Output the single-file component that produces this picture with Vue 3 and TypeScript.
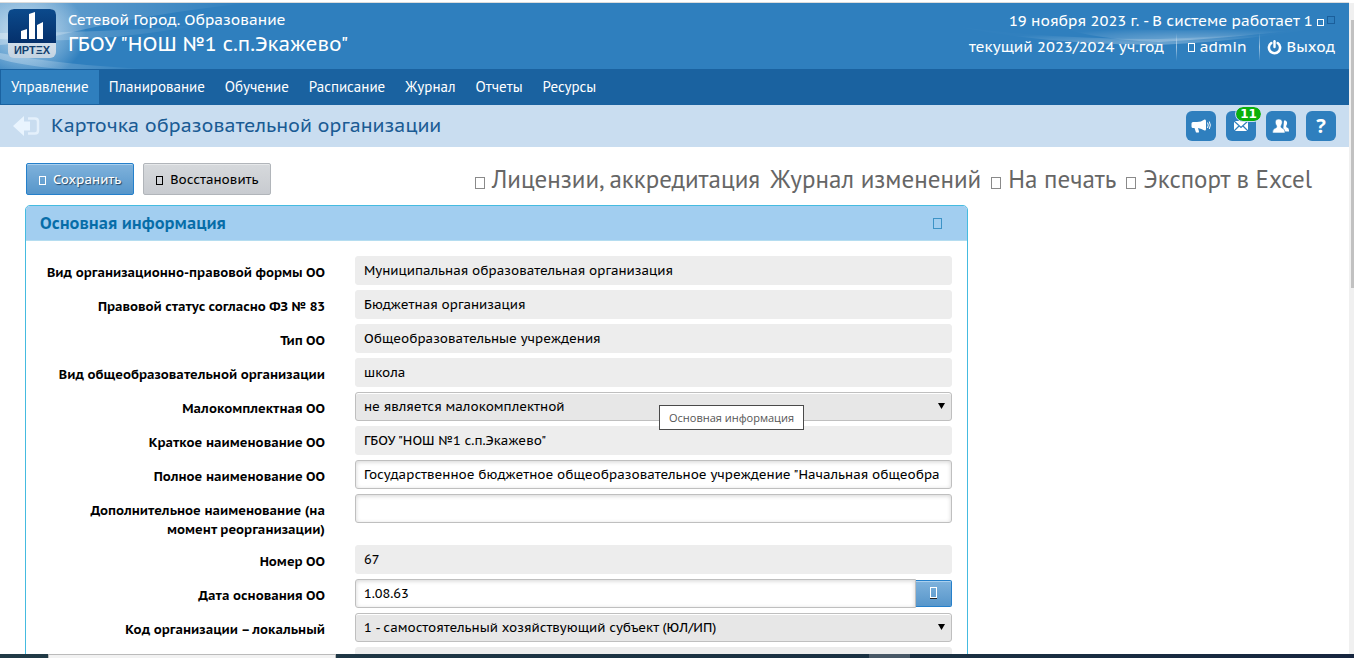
<script setup lang="ts">
import { ref } from 'vue'

type Kind = 'readonly' | 'text' | 'select' | 'date'

interface Field {
  id: string
  label: string
  kind: Kind
  value: string
}

const menu: string[] = ['Управление', 'Планирование', 'Обучение', 'Расписание', 'Журнал', 'Отчеты', 'Ресурсы']

const fields = ref<Field[]>([
  { id: 'legal-form', label: 'Вид организационно-правовой формы ОО', kind: 'readonly', value: 'Муниципальная образовательная организация' },
  { id: 'legal-status', label: 'Правовой статус согласно ФЗ № 83', kind: 'readonly', value: 'Бюджетная организация' },
  { id: 'type', label: 'Тип ОО', kind: 'readonly', value: 'Общеобразовательные учреждения' },
  { id: 'school-kind', label: 'Вид общеобразовательной организации', kind: 'readonly', value: 'школа' },
  { id: 'small', label: 'Малокомплектная ОО', kind: 'select', value: 'не является малокомплектной' },
  { id: 'short-name', label: 'Краткое наименование ОО', kind: 'readonly', value: 'ГБОУ "НОШ №1 с.п.Экажево"' },
  { id: 'full-name', label: 'Полное наименование ОО', kind: 'text', value: 'Государственное бюджетное общеобразовательное учреждение "Начальная общеобра' },
  { id: 'extra-name', label: 'Дополнительное наименование (на момент реорганизации)', kind: 'text', value: '' },
  { id: 'number', label: 'Номер ОО', kind: 'readonly', value: '67' },
  { id: 'founded', label: 'Дата основания ОО', kind: 'date', value: '1.08.63' },
  { id: 'local-code', label: 'Код организации – локальный', kind: 'select', value: '1 - самостоятельный хозяйствующий субъект (ЮЛ/ИП)' },
  { id: 'next', label: '', kind: 'readonly', value: '' },
])
</script>

<template>
  <div class="screen">
    <div class="viewport">
      <div class="page">
        <header class="top">
          <svg class="swoosh left" viewBox="0 0 340 66" aria-hidden="true">
            <defs>
              <radialGradient id="glow">
                <stop offset="0" stop-color="#fff" stop-opacity=".75" />
                <stop offset=".55" stop-color="#d5eaf8" stop-opacity=".4" />
                <stop offset="1" stop-color="#fff" stop-opacity="0" />
              </radialGradient>
              <linearGradient id="fade-r">
                <stop offset="0" stop-color="#fff" stop-opacity=".3" />
                <stop offset="1" stop-color="#fff" stop-opacity="0" />
              </linearGradient>
            </defs>
            <ellipse cx="26" cy="30" rx="60" ry="48" fill="url(#glow)" />
            <path d="M0 0H250Q150 10 60 32Q25 40 0 42Z" fill="url(#fade-r)" />
            <path d="M0 36Q90 42 200 22Q100 30 0 30Z" fill="url(#fade-r)" />
            <path d="M0 50Q60 62 150 66H60Q20 62 0 56Z" fill="url(#fade-r)" />
          </svg>
          <svg class="swoosh right" viewBox="0 0 400 66" aria-hidden="true">
            <defs>
              <radialGradient id="arc" cx=".5" cy=".9" r=".5">
                <stop offset="0" stop-color="#fff" stop-opacity=".3" />
                <stop offset="1" stop-color="#fff" stop-opacity=".01" />
              </radialGradient>
            </defs>
            <path d="M90 16Q130 36 210 39Q300 34 385 22Q300 28 210 27Q130 26 90 16Z" fill="url(#arc)" />
            <path d="M10 24Q100 42 210 42Q300 38 385 22Q300 34 210 36Q100 36 10 24Z" fill="url(#arc)" />
          </svg>

          <svg class="logo" viewBox="0 0 48 49" role="img" aria-label="ИРТЕХ">
            <defs>
              <linearGradient id="navy" x2="0" y2="1">
                <stop offset="0" stop-color="#0b4a8c" />
                <stop offset="1" stop-color="#05306b" />
              </linearGradient>
              <linearGradient id="plate" x2="0" y2="1">
                <stop offset="0" stop-color="#f4f8fb" />
                <stop offset="1" stop-color="#c3d3e2" />
              </linearGradient>
            </defs>
            <rect width="48" height="49" rx="6" fill="url(#plate)" />
            <path d="M0 34V6Q0 0 6 0H42Q48 0 48 6V34Z" fill="url(#navy)" />
            <path d="M13 22L19 20V30H13ZM21 5L27 3V30H21ZM29 16L35 13V30H29Z" fill="#fff" />
            <text x="24" y="45" text-anchor="middle">ИРТΞХ</text>
          </svg>
          <div class="titles">
            <div class="product">Сетевой Город. Образование</div>
            <div class="school">ГБОУ "НОШ №1 с.п.Экажево"</div>
          </div>
          <div class="session">
            <div class="today">19 ноября 2023 г. - В системе работает 1 <i class="tofu tiny"></i><i class="tofu tiny dark"></i></div>
            <div class="user-row">
              <a href="#">текущий 2023/2024 уч.год</a>
              <a href="#" class="parted"><i class="tofu tiny tall"></i> admin</a>
              <a href="#" class="parted">
                <svg class="power" viewBox="0 0 15 15" aria-hidden="true">
                  <path d="M4.300 3A5.600 5.600 0 1 0 10.700 3" fill="none" stroke="#fff" stroke-width="2.600" stroke-linecap="round" />
                  <path d="M7.500 1.300V7" stroke="#fff" stroke-width="2.400" stroke-linecap="round" />
                </svg>Выход
              </a>
            </div>
          </div>
        </header>

        <nav class="menu">
          <a v-for="(item, i) in menu" :key="item" href="#" :class="{ active: i === 0 }">{{ item }}</a>
        </nav>

        <div class="heading">
          <a href="#" class="back" aria-label="Назад">
            <svg viewBox="0 0 30 22" aria-hidden="true">
              <path d="M1 11L12 1V6.5H18V15.5H12V21Z" fill="#e9f4fe" />
              <path d="M16 3.500H23Q26 3.500 26 6.500V15.500Q26 18.500 23 18.500H16" fill="none" stroke="#e4f0fb" stroke-width="2.500" />
            </svg>
          </a>
          <h1>Карточка образовательной организации</h1>
          <div class="tools">
            <button type="button" aria-label="Объявления">
              <svg viewBox="0 0 30 30" aria-hidden="true">
                <path d="M5.500 12.500Q5.500 11 7 11H11Q15 11 18.500 8.500Q20 8 20 10V18Q20 20 18.500 19.500Q15.500 17.500 12 17L13 20.500Q13 22 11.500 21.500H10L8.500 17H7Q5.500 17 5.500 15.500Z" fill="#fff" />
                <path d="M21.500 11.500Q23 14 21.500 17M23.300 10.500Q25.400 14 23.300 18" fill="none" stroke="#fff" />
              </svg>
            </button>
            <button type="button" aria-label="Почта">
              <svg viewBox="0 0 30 30" aria-hidden="true">
                <path d="M8 10H22V20H8Z" fill="#fff" />
                <path d="M8 10L15 16.500L22 10M8 20L13 15M22 20L17 15" fill="none" stroke="#2f7fbe" stroke-width="1.200" />
              </svg>
              <span class="badge">11</span>
            </button>
            <button type="button" aria-label="Пользователи">
              <svg viewBox="0 0 30 30" aria-hidden="true">
                <path d="M18 9.500C21 9 21.800 12 20.500 14.200C19.900 15.300 20.100 16 21 16.500Q23 17.200 23 19.500V20.500H17Z" fill="#fff" />
                <path d="M12.800 8C16.500 8 17 11.500 15.500 14C14.600 15.500 14.800 16.500 16 17Q19 17.800 19 21V22H6.600V21Q6.600 17.800 9.600 17C10.900 16.500 11 15.500 10.100 14C8.600 11.500 9.100 8 12.800 8Z" fill="#fff" stroke="#2f7fbe" stroke-width=".6" />
              </svg>
            </button>
            <button type="button" class="help">?</button>
          </div>
        </div>

        <main>
          <div class="actions">
            <button type="button" class="btn primary"><i class="tofu"></i>Сохранить</button>
            <button type="button" class="btn"><i class="tofu"></i>Восстановить</button>
            <div class="links">
              <a href="#"><i class="tofu big"></i>Лицензии, аккредитация</a>
              <a href="#">Журнал изменений</a>
              <a href="#"><i class="tofu big"></i>На печать</a>
              <a href="#"><i class="tofu big"></i>Экспорт в Excel</a>
            </div>
          </div>

          <section class="panel">
            <h2>Основная информация <i class="tofu mark"></i></h2>
            <form class="form" @submit.prevent>
              <div v-for="f in fields" :key="f.id" class="row">
                <label :for="f.id">{{ f.label }}</label>
                <input v-if="f.kind === 'readonly'" :id="f.id" class="control plain" type="text" readonly :value="f.value" />
                <input v-else-if="f.kind === 'text'" :id="f.id" v-model="f.value" class="control box" type="text" />
                <div v-else-if="f.kind === 'select'" class="pick">
                  <select :id="f.id" v-model="f.value" class="control">
                    <option :value="f.value">{{ f.value }}</option>
                  </select>
                  <svg class="arrow" viewBox="0 0 7 6" aria-hidden="true"><path d="M0 0H7L3.500 6Z" /></svg>
                </div>
                <div v-else class="date">
                  <input :id="f.id" v-model="f.value" class="control box" type="text" />
                  <button type="button" aria-label="Календарь"><i class="tofu"></i></button>
                </div>
              </div>
            </form>
          </section>
        </main>
        <div class="tip" role="tooltip">Основная информация</div>
      </div>
      <div class="scroll"><div class="thumb"></div></div>
    </div>
    <div class="taskbar"><div class="search"></div><div class="task"></div></div>
  </div>
</template>

<style>
body {
  margin: 0;
}
</style>

<style scoped>
* {
  box-sizing: border-box;
}

.screen {
  display: flex;
  flex-direction: column;
  height: 100vh;
  overflow: hidden;
  background: #fff;
  color: #000;
  font: 13px/19px "PT Sans Caption", "Noto Sans", sans-serif;
}

.viewport {
  display: flex;
  flex: 1;
  min-height: 0;
  padding-top: 2px;
}

.page {
  position: relative;
  flex: 1;
  min-width: 0;
  overflow: hidden;
  border-top: 1px solid #dcdcdc;
}

a {
  color: inherit;
  text-decoration: none;
}

button,
input,
select {
  font: inherit;
  color: inherit;
}

.tofu {
  display: inline-block;
  flex: none;
  width: 7px;
  height: 9px;
  border: 1px solid currentColor;
}

.tofu.tiny {
  width: 7px;
  height: 7px;
}

.tofu.tall {
  height: 9px;
}

.tofu.dark {
  margin-left: 3px;
  width: 8px;
  height: 8px;
  color: #1b5f9b;
  vertical-align: 2px;
}

.tofu.big {
  width: 10px;
  height: 12px;
  margin-right: 7px;
  border-color: #8a8a8a;
  vertical-align: -1px;
}

.top {
  position: relative;
  display: flex;
  height: 66px;
  padding: 6px 14px 0 8px;
  background: #2f7fbe;
  color: #fff;
}

.swoosh {
  position: absolute;
  top: 0;
  height: 66px;
}

.swoosh.left {
  left: 0;
}

.swoosh.right {
  right: 0;
}

.logo {
  position: relative;
  width: 48px;
  height: 49px;
}

.logo text {
  font: bold 11px "Liberation Sans", sans-serif;
  fill: #12406f;
}

.titles {
  position: relative;
  margin-left: 12px;
  white-space: nowrap;
}

.product {
  font-size: 15px;
  line-height: 22px;
}

.school {
  font-size: 20px;
  line-height: 26px;
}

.session {
  position: relative;
  margin-left: auto;
  font-size: 15px;
  white-space: nowrap;
  text-align: right;
}

.today {
  line-height: 24px;
}

.user-row {
  display: flex;
  justify-content: flex-end;
  line-height: 28px;
}

.parted {
  display: flex;
  align-items: center;
  gap: 5px;
  margin-left: 12px;
  padding-left: 12px;
  background: linear-gradient(#ffffff00, #ffffff90, #ffffff00) left / 1px 100% no-repeat;
}

.parted + .parted {
  padding-left: 8px;
}

.power {
  width: 15px;
  height: 15px;
}

.menu {
  display: flex;
  height: 36px;
  padding: 1px;
  background: #1a62a0;
  color: #fff;
  font-family: "PT Sans", "Noto Sans", sans-serif;
  font-size: 15px;
  line-height: 34px;
  white-space: nowrap;
}

.menu a {
  padding: 0 10px;
}

.menu .active {
  background: #2f7fbe;
}

.heading {
  display: flex;
  align-items: center;
  height: 42px;
  padding: 0 13px 0 12px;
  background: #c9ddf0;
}

.back,
.back svg {
  display: block;
  width: 30px;
  height: 22px;
}

h1 {
  margin: 0 auto 3px 9px;
  color: #1a5b94;
  font-size: 19px;
  font-weight: 400;
  line-height: 28px;
  white-space: nowrap;
}

.tools {
  display: flex;
  gap: 10px;
}

.tools button {
  position: relative;
  width: 30px;
  height: 30px;
  padding: 0;
  border: 0;
  border-radius: 6px;
  background: #2f7fbe;
  color: #fff;
}

.tools svg {
  display: block;
}

.tools .help {
  font: bold 20px/30px "Noto Sans", sans-serif;
}

.badge {
  position: absolute;
  top: -4px;
  left: 10px;
  width: 25px;
  height: 14px;
  border-radius: 7px;
  outline: 1px solid #c9ddf0;
  background: #0ab00a;
  font: bold 12px/14px "DejaVu Sans", sans-serif;
}

main {
  padding: 16px 25px 0;
}

.actions {
  display: flex;
  align-items: center;
  padding-left: 1px;
  white-space: nowrap;
}

.btn {
  display: flex;
  align-items: center;
  gap: 7px;
  height: 32px;
  margin-right: 9px;
  padding: 0 12px;
  border: 1px solid #b1b5ba;
  border-radius: 2px;
  background: linear-gradient(#d6d9dc, #c8cbd0);
  box-shadow: inset 0 1px #e6e8ea;
}

.primary {
  border-color: #2580cb;
  background: linear-gradient(#7fb2dc, #5796ca);
  box-shadow: inset 0 1px #abd0ee;
  color: #fff;
  text-shadow: 1px 1px 1px #20415f;
}

.btn .tofu {
  margin-top: 3px;
}

.links {
  display: flex;
  gap: 10px;
  margin-left: auto;
  padding-right: 12px;
  color: #666;
  font-family: "PT Sans", "Noto Sans", sans-serif;
  font-size: 25px;
  line-height: 32px;
}

.panel {
  width: 70%;
  width: calc(70% + 34px);
  max-width: 944px;
  margin-top: 10px;
  border: 1px solid #45bbe0;
  border-radius: 5px 5px 0 0;
}

h2 {
  display: flex;
  align-items: center;
  justify-content: space-between;
  margin: 0;
  height: 35px;
  padding: 0 25px 0 14px;
  border-bottom: 1px solid #b5ddf0;
  border-radius: 4px 4px 0 0;
  background: #a2cef0;
  color: #076da8;
  font-size: 16px;
}

.mark {
  width: 9px;
  height: 11px;
  color: #3d93c6;
}

.form {
  display: flex;
  flex-direction: column;
  gap: 5px;
  padding: 15px 15px 15px 0;
}

.row {
  display: grid;
  grid-template-columns: 299px 1fr;
  column-gap: 30px;
  align-items: start;
}

label {
  padding: 7px 0 1px 20px;
  font-weight: 700;
  text-align: right;
}

.control {
  display: block;
  width: 100%;
  height: 29px;
  margin: 0;
  padding: 0 8px;
  border: 1px solid #bfbfbf;
  border-radius: 3px;
  outline: 0;
}

.plain {
  border-color: #ededed;
  background: #ededed;
}

.box {
  background: #fff;
  box-shadow: inset 0 1px 4px #d4d4d4;
}

.pick {
  position: relative;
}

select.control {
  appearance: none;
  background: #e7e7e7;
  box-shadow: inset 0 1px #fff;
}

.arrow {
  position: absolute;
  top: 11px;
  right: 7px;
  width: 7px;
  height: 6px;
  pointer-events: none;
}

.date {
  display: flex;
  align-items: center;
}

.date .control {
  flex: 1;
  min-width: 0;
  border-radius: 3px 0 0 3px;
}

.date button {
  width: 36px;
  height: 27px;
  padding: 0;
  border: 1px solid #2580cb;
  border-left: 0;
  border-radius: 0 2px 2px 0;
  background: linear-gradient(#7fb2dc, #5796ca);
  box-shadow: inset 0 1px #abd0ee;
  color: #fff;
  line-height: 1;
}

.date .tofu {
  height: 11px;
  box-shadow: 0 1px #222;
}

.tip {
  position: absolute;
  top: 402px;
  left: 659px;
  padding: 1px 9px;
  border: 1px solid #4a4a4a;
  background: #fff;
  color: #555;
  font: 11px/21px "Open Sans", sans-serif;
}

.scroll {
  width: 5px;
  margin-top: 1px;
  padding: 17px 0 0 2px;
  background: #f0f0f0;
}

.thumb {
  height: 268px;
  background: #c1c1c1;
}

.taskbar {
  display: flex;
  flex: none;
  height: 4px;
  padding-left: 48px;
  background: linear-gradient(90deg, #213a46, #1a3042 70%, #17263f);
}

.search {
  width: 288px;
  border: 1px solid #bbb;
  border-bottom: 0;
  background: #f2f2f2;
}

.task {
  width: 41px;
  margin-left: 533px;
  background: #485866;
}
</style>
